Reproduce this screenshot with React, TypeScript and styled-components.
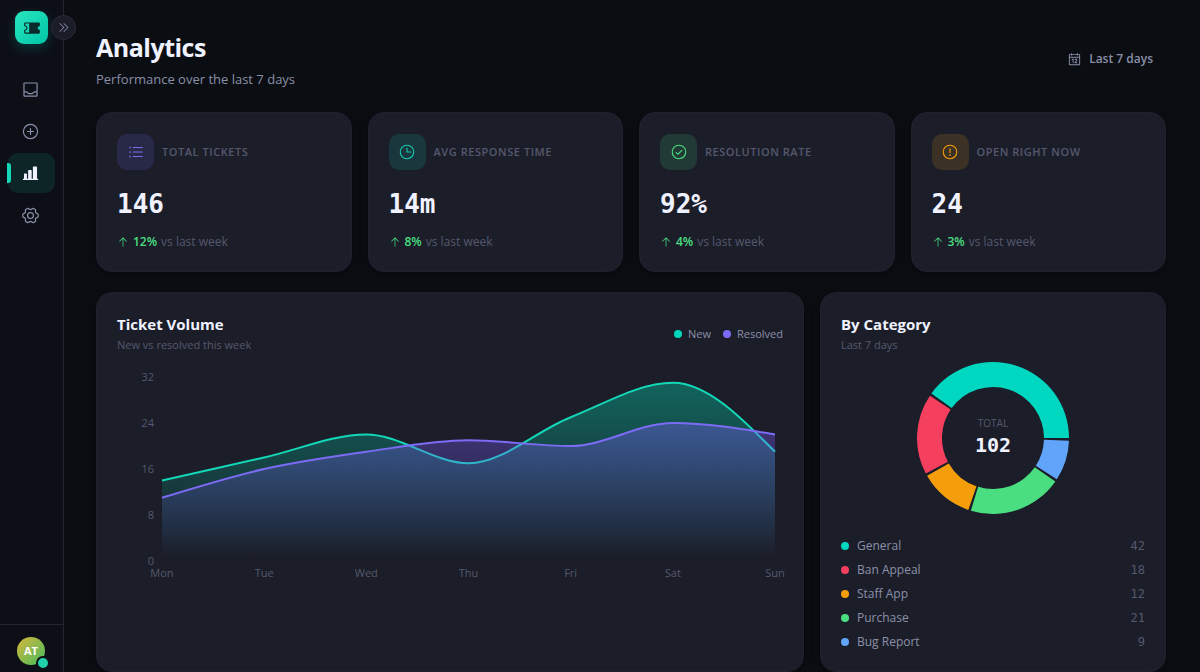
import React from 'react';
import styled, { createGlobalStyle } from 'styled-components';
import type { IconType } from 'react-icons';
import {
  PiArrowUp,
  PiCalendar,
  PiCaretDoubleRight,
  PiChartBarFill,
  PiCheckCircle,
  PiClock,
  PiGearSix,
  PiListBullets,
  PiPlusCircle,
  PiTicketFill,
  PiTray,
  PiWarningCircle,
} from 'react-icons/pi';

const color = {
  page: '#0a0d12',
  sidebar: '#0d0f17',
  card: '#1b1e29',
  line: '#222532',
  cardLine: '#1f222e',
  text: '#f0f2ff',
  soft: '#8b8fa8',
  muted: '#55586d',
  teal: '#00d7c0',
  mint: '#14d7b8',
  violet: '#7c6cf5',
  green: '#4ade80',
  amber: '#f59e0b',
  red: '#f43f5e',
  blue: '#60a5fa',
};

const mono = `'DejaVu Sans Mono', 'Liberation Mono', monospace`;

const GlobalStyle = createGlobalStyle`
  *, *::before, *::after { box-sizing: border-box; }
  body {
    margin: 0;
    background: ${color.page};
    color: ${color.text};
    font-family: 'Open Sans', 'Noto Sans', sans-serif;
    font-size: 13px;
    line-height: 18px;
  }
  h1, h2, p, ul, dl, dd { margin: 0; padding: 0; }
  button { font: inherit; color: inherit; background: none; border: 0; padding: 0; cursor: pointer; }
  svg { display: block; }
`;

const Shell = styled.div`
  display: flex;
  height: 100vh;
`;

const Sidebar = styled.aside`
  position: relative;
  display: flex;
  flex-direction: column;
  flex: 0 0 64px;
  background: ${color.sidebar};
  border-right: 1px solid ${color.line};
`;

const Logo = styled.div`
  display: grid;
  place-items: center;
  width: 33px;
  height: 33px;
  margin: 11px 0 25px 15px;
  border-radius: 9px;
  font-size: 18px;
  color: #0b2a2c;
  background: linear-gradient(135deg, #2ae6be, #00c4a7);
  box-shadow: 0 4px 12px rgba(0, 215, 192, 0.2);
`;

const ExpandButton = styled.button`
  position: absolute;
  top: 15px;
  right: -13px;
  display: grid;
  place-items: center;
  width: 25px;
  height: 25px;
  border: 1px solid #282b39;
  border-radius: 50%;
  font-size: 13px;
  color: ${color.soft};
  background: #1a1c28;
`;

const Nav = styled.nav`
  display: flex;
  flex-direction: column;
  gap: 2px;
  padding: 0 8px;
`;

const NavLink = styled.a<{ $active?: boolean }>`
  position: relative;
  display: grid;
  place-items: center;
  height: 40px;
  padding-right: 2px;
  border-radius: 10px;
  font-size: 19px;
  color: ${(p) => (p.$active ? color.text : color.soft)};
  background: ${(p) => (p.$active ? '#0d2527' : 'transparent')};

  &::before {
    content: '';
    display: ${(p) => (p.$active ? 'block' : 'none')};
    position: absolute;
    left: -1px;
    top: 10px;
    width: 4px;
    height: 20px;
    border-radius: 0 3px 3px 0;
    background: ${color.mint};
  }
`;

const SidebarFooter = styled.div`
  margin-top: auto;
  padding: 12px 17px 7px;
  border-top: 1px solid ${color.line};
`;

const Avatar = styled.button`
  position: relative;
  display: grid;
  place-items: center;
  width: 28px;
  height: 28px;
  border-radius: 50%;
  font-size: 11px;
  font-weight: 700;
  color: #fff;
  background: linear-gradient(135deg, #d8b63c, #45bd5c);

  &::after {
    content: '';
    position: absolute;
    right: -5px;
    bottom: -5px;
    width: 14px;
    height: 14px;
    border: 2px solid ${color.sidebar};
    border-radius: 50%;
    background: #1fd0a8;
  }
`;

const Main = styled.main`
  flex: 1;
  min-width: 0;
  padding: 31px 34px 0 32px;
  overflow-y: auto;
  scrollbar-width: none;
`;

const PageHeader = styled.header`
  display: flex;
  justify-content: space-between;
  align-items: center;
  margin-bottom: 23px;
`;

const PageTitle = styled.h1`
  font-size: 25px;
  line-height: 32px;
  font-weight: 700;
  letter-spacing: -0.02em;
`;

const PageSubtitle = styled.p`
  margin-top: 6px;
  font-size: 13px;
  line-height: 20px;
  color: ${color.soft};
`;

const RangeButton = styled.button`
  display: flex;
  align-items: center;
  gap: 7px;
  padding: 5px 13px 7px;
  font-size: 12px;
  font-weight: 600;
  color: ${color.soft};

  svg {
    font-size: 15px;
  }
`;

const Card = styled.section`
  padding: 20px;
  border: 1px solid ${color.cardLine};
  border-radius: 16px;
  background: ${color.card};
  box-shadow: 0 2px 8px rgba(0, 0, 0, 0.35);
`;

const StatCard = styled(Card)`
  padding-top: 21px;
`;

const StatGrid = styled.div`
  display: grid;
  grid-template-columns: repeat(4, minmax(0, 1fr));
  gap: 16px;
  margin-bottom: 20px;
`;

const StatHead = styled.div`
  display: flex;
  align-items: center;
  gap: 8px;
`;

const IconTile = styled.span<{ $tint: string }>`
  display: grid;
  place-items: center;
  flex: none;
  width: 37px;
  height: 36px;
  border-radius: 10px;
  font-size: 18px;
  color: ${(p) => p.$tint};
  background: ${(p) => p.$tint}26;
`;

const StatLabel = styled.h2`
  font-size: 11px;
  line-height: 18px;
  font-weight: 600;
  letter-spacing: 0.05em;
  text-transform: uppercase;
  color: ${color.muted};
`;

const StatValue = styled.p`
  margin-top: 17px;
  font-family: ${mono};
  font-size: 26px;
  line-height: 34px;
  font-weight: 700;
`;

const StatDelta = styled.p`
  display: flex;
  align-items: center;
  gap: 4px;
  margin-top: 12px;
  font-size: 12px;
  line-height: 18px;
  color: ${color.muted};

  svg {
    font-size: 12px;
    color: ${color.green};
  }
  strong {
    font-weight: 600;
    color: ${color.green};
  }
`;

const PanelGrid = styled.div`
  display: grid;
  grid-template-columns: minmax(0, 708fr) minmax(0, 346fr);
  gap: 16px;
`;

const PanelHead = styled.div`
  display: flex;
  justify-content: space-between;
  align-items: center;
`;

const PanelTitle = styled.h2`
  font-size: 15px;
  line-height: 22px;
  font-weight: 700;
`;

const PanelSubtitle = styled.p`
  margin-top: 1px;
  font-size: 11px;
  line-height: 18px;
  color: ${color.muted};
`;

const SeriesLegend = styled.ul`
  display: flex;
  gap: 12px;
  list-style: none;
  font-size: 11px;
  color: ${color.soft};

  li {
    display: flex;
    align-items: center;
    gap: 6px;
  }
`;

const Dot = styled.span<{ $fill: string }>`
  width: 8px;
  height: 8px;
  border-radius: 50%;
  background: ${(p) => p.$fill};
`;

const Chart = styled.figure`
  display: grid;
  grid-template-columns: 37px minmax(0, 1fr);
  column-gap: 8px;
  margin: 23px 8px 0 0;
  font-size: 11px;
  line-height: 12px;
  color: ${color.muted};
`;

const YAxis = styled.div`
  display: flex;
  flex-direction: column;
  justify-content: space-between;
  margin: -6px 0;
  text-align: right;
`;

const XAxis = styled.div`
  grid-column: 2;
  display: flex;
  justify-content: space-between;
  margin: 6px -20px 0;

  span {
    width: 40px;
    text-align: center;
  }
`;

const Plot = styled.svg`
  width: 100%;
  height: 184px;
  overflow: visible;
`;

const DonutWrap = styled.div`
  display: grid;
  place-items: center;
  margin: 8px 0 23px;

  > * {
    grid-area: 1 / 1;
  }
`;

const DonutLabel = styled.p`
  padding-bottom: 3px;
  font-size: 10px;
  line-height: 16px;
  text-align: center;
  color: ${color.muted};

  strong {
    display: block;
    font-family: ${mono};
    font-size: 20px;
    line-height: 28px;
    font-weight: 700;
    color: ${color.text};
  }
`;

const CategoryList = styled.dl`
  display: grid;
  gap: 6px;
`;

const CategoryRow = styled.div`
  display: flex;
  align-items: center;
  gap: 8px;

  dt {
    flex: 1;
    font-size: 12px;
    color: ${color.soft};
  }
  dd {
    font-family: ${mono};
    font-size: 12px;
    color: ${color.muted};
  }
`;

const navItems: { label: string; icon: IconType; active?: boolean }[] = [
  { label: 'Inbox', icon: PiTray },
  { label: 'New ticket', icon: PiPlusCircle },
  { label: 'Analytics', icon: PiChartBarFill, active: true },
  { label: 'Settings', icon: PiGearSix },
];

const stats: { label: string; value: string; delta: string; tint: string; icon: IconType }[] = [
  { label: 'Total Tickets', value: '146', delta: '12%', tint: color.violet, icon: PiListBullets },
  { label: 'Avg Response Time', value: '14m', delta: '8%', tint: '#14c9ae', icon: PiClock },
  { label: 'Resolution Rate', value: '92%', delta: '4%', tint: color.green, icon: PiCheckCircle },
  { label: 'Open Right Now', value: '24', delta: '3%', tint: color.amber, icon: PiWarningCircle },
];

const days = ['Mon', 'Tue', 'Wed', 'Thu', 'Fri', 'Sat', 'Sun'];
const ticks = [32, 24, 16, 8, 0];
const created = [14, 18, 22, 17, 25, 31, 19];
const resolved = [11, 16, 19, 21, 20, 24, 22];

const categories = [
  { name: 'General', count: 42, fill: color.teal },
  { name: 'Ban Appeal', count: 18, fill: color.red },
  { name: 'Staff App', count: 12, fill: color.amber },
  { name: 'Purchase', count: 21, fill: color.green },
  { name: 'Bug Report', count: 9, fill: color.blue },
];
const total = categories.reduce((sum, c) => sum + c.count, 0);

const PLOT_W = 612;
const PLOT_H = 184;

/* Monotone cubic interpolation through evenly spaced values. */
function curve(values: number[]): string {
  const step = PLOT_W / (values.length - 1);
  const ys = values.map((v) => PLOT_H - (v / 32) * PLOT_H);
  const slopes = ys.slice(1).map((y, i) => (y - ys[i]) / step);
  const n = ys.length;
  const tangents = ys.map((_, i) => {
    if (i === 0 || i === n - 1) return 0;
    const a = slopes[i - 1];
    const b = slopes[i];
    if (a * b <= 0) return 0;
    return Math.sign(a) * 2 * Math.min(Math.abs(a), Math.abs(b), Math.abs(a + b) / 4);
  });
  tangents[0] = (3 * slopes[0] - tangents[1]) / 2;
  tangents[n - 1] = (3 * slopes[n - 2] - tangents[n - 2]) / 2;
  let d = `M0,${ys[0]}`;
  for (let i = 1; i < n; i++) {
    const x0 = (i - 1) * step;
    const x1 = i * step;
    d += `C${x0 + step / 3},${ys[i - 1] + (tangents[i - 1] * step) / 3} ${x1 - step / 3},${
      ys[i] - (tangents[i] * step) / 3
    } ${x1},${ys[i]}`;
  }
  return d;
}

function VolumePlot() {
  const series = [
    { id: 'created', d: curve(created), stroke: color.mint, from: '#00d7b0' },
    { id: 'resolved', d: curve(resolved), stroke: color.violet, from: '#7c5cfc' },
  ];
  return (
    <Plot viewBox={`0 0 ${PLOT_W} ${PLOT_H}`} preserveAspectRatio="none" aria-hidden="true">
      <defs>
        {series.map((s) => (
          <linearGradient key={s.id} id={s.id} x1="0" y1="0" x2="0" y2="1">
            <stop offset="5%" stopColor={s.from} stopOpacity="0.36" />
            <stop offset="97%" stopColor={s.from} stopOpacity="0" />
          </linearGradient>
        ))}
      </defs>
      {ticks.map((t) => (
        <line
          key={t}
          x1="0"
          x2={PLOT_W}
          y1={PLOT_H - (t / 32) * PLOT_H}
          y2={PLOT_H - (t / 32) * PLOT_H}
          stroke="rgba(255,255,255,0.02)"
          strokeDasharray="3 3"
        />
      ))}
      {series.map((s) => (
        <g key={s.id}>
          <path d={`${s.d}L${PLOT_W},${PLOT_H}L0,${PLOT_H}Z`} fill={`url(#${s.id})`} />
          <path d={s.d} fill="none" stroke={s.stroke} strokeWidth="2" vectorEffect="non-scaling-stroke" />
        </g>
      ))}
    </Plot>
  );
}

/* Ring slices run counter-clockwise from three o'clock, two degrees apart. */
function Donut() {
  const outer = 76;
  const inner = 51;
  const pad = 2;
  const sweep = 360 - pad * categories.length;
  const point = (r: number, deg: number) => {
    const a = (deg * Math.PI) / 180;
    return `${76 + r * Math.cos(a)},${76 - r * Math.sin(a)}`;
  };
  let start = 0;
  return (
    <svg width="152" height="152" viewBox="0 0 152 152" aria-hidden="true">
      {categories.map((c) => {
        const a = start;
        const b = a + (c.count / total) * sweep;
        start = b + pad;
        return (
          <path
            key={c.name}
            fill={c.fill}
            d={`M${point(outer, a)}A${outer},${outer} 0 0 0 ${point(outer, b)}L${point(inner, b)}A${inner},${inner} 0 0 1 ${point(inner, a)}Z`}
          />
        );
      })}
    </svg>
  );
}

export default function App() {
  return (
    <>
      <GlobalStyle />
      <Shell>
        <Sidebar>
          <Logo>
            <PiTicketFill />
          </Logo>
          <ExpandButton aria-label="Expand sidebar">
            <PiCaretDoubleRight />
          </ExpandButton>
          <Nav aria-label="Main">
            {navItems.map(({ label, icon: Icon, active }) => (
              <NavLink
                key={label}
                href="#"
                aria-label={label}
                aria-current={active ? 'page' : undefined}
                $active={active}
              >
                <Icon />
              </NavLink>
            ))}
          </Nav>
          <SidebarFooter>
            <Avatar aria-label="Account">AT</Avatar>
          </SidebarFooter>
        </Sidebar>

        <Main>
          <PageHeader>
            <div>
              <PageTitle>Analytics</PageTitle>
              <PageSubtitle>Performance over the last 7 days</PageSubtitle>
            </div>
            <RangeButton>
              <PiCalendar />
              Last 7 days
            </RangeButton>
          </PageHeader>

          <StatGrid>
            {stats.map(({ label, value, delta, tint, icon: Icon }) => (
              <StatCard key={label}>
                <StatHead>
                  <IconTile $tint={tint}>
                    <Icon />
                  </IconTile>
                  <StatLabel>{label}</StatLabel>
                </StatHead>
                <StatValue>{value}</StatValue>
                <StatDelta>
                  <PiArrowUp />
                  <strong>{delta}</strong>
                  <span>vs last week</span>
                </StatDelta>
              </StatCard>
            ))}
          </StatGrid>

          <PanelGrid>
            <Card>
              <PanelHead>
                <div>
                  <PanelTitle>Ticket Volume</PanelTitle>
                  <PanelSubtitle>New vs resolved this week</PanelSubtitle>
                </div>
                <SeriesLegend>
                  <li>
                    <Dot $fill={color.teal} />
                    New
                  </li>
                  <li>
                    <Dot $fill={color.violet} />
                    Resolved
                  </li>
                </SeriesLegend>
              </PanelHead>
              <Chart aria-label="New and resolved tickets per day">
                <YAxis>
                  {ticks.map((t) => (
                    <span key={t}>{t}</span>
                  ))}
                </YAxis>
                <VolumePlot />
                <XAxis>
                  {days.map((d) => (
                    <span key={d}>{d}</span>
                  ))}
                </XAxis>
              </Chart>
            </Card>

            <Card>
              <PanelTitle>By Category</PanelTitle>
              <PanelSubtitle>Last 7 days</PanelSubtitle>
              <DonutWrap>
                <Donut />
                <DonutLabel>
                  TOTAL
                  <strong>{total}</strong>
                </DonutLabel>
              </DonutWrap>
              <CategoryList>
                {categories.map((c) => (
                  <CategoryRow key={c.name}>
                    <Dot $fill={c.fill} />
                    <dt>{c.name}</dt>
                    <dd>{c.count}</dd>
                  </CategoryRow>
                ))}
              </CategoryList>
            </Card>
          </PanelGrid>
        </Main>
      </Shell>
    </>
  );
}
